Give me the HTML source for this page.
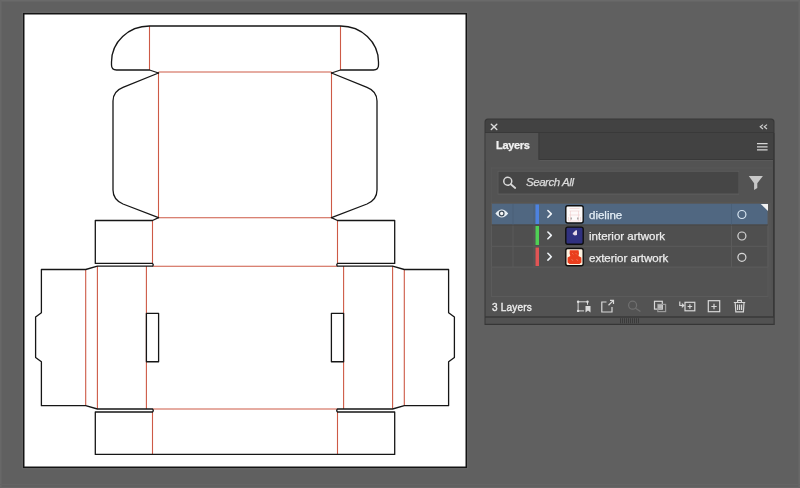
<!DOCTYPE html>
<html><head><meta charset="utf-8">
<style>
html,body{margin:0;padding:0;width:800px;height:488px;overflow:hidden;background:#606060;font-family:"Liberation Sans",sans-serif;}
.abs{position:absolute;}
#art{position:absolute;left:0;top:0;}
#panel{position:absolute;left:485px;top:119px;width:289px;height:206px;background:#535353;}
.txt{position:absolute;white-space:nowrap;color:#e6e6e6;will-change:transform;-webkit-text-stroke:0.25px currentColor;line-height:1;}
</style></head>
<body>
<svg id="art" width="800" height="488" viewBox="0 0 800 488">
  <rect x="0" y="0" width="800" height="1.5" fill="#6a6a6a"/>
  <rect x="0" y="0" width="1.5" height="488" fill="#686868"/>
  <rect x="798.5" y="0" width="1.5" height="488" fill="#686868"/>
  <rect x="0" y="484" width="800" height="1" fill="#646464"/>
  <rect x="0" y="487" width="800" height="1" fill="#676767"/>
  <rect x="22.2" y="12.2" width="445.6" height="456.6" fill="none" stroke="#686868" stroke-width="1"/>
  <rect x="23.75" y="13.75" width="442.5" height="453.5" fill="#fff" stroke="#141414" stroke-width="1.5"/>
  <g fill="none" stroke="#cd5a46" stroke-width="1.1">
    <path d="M149.5 26V70M340.5 26V70M158.5 72H331.5M158.5 72V217.8M331.5 72V217.8M158.5 217.8H331.5M152.5 220.5V263M337.5 220.5V263M152.5 266.2H337.5M146.4 266V409M343.6 266V409M97.4 266V409M392.6 266V409M85.7 269.5V405.7M404.3 269.5V405.7M152.5 409H337.5M152.5 412V454.4M337.5 412V454.4"/>
  </g>
  <g fill="none" stroke="#161616" stroke-width="1.3" stroke-linejoin="round" stroke-linecap="round">
    <!-- lid -->
    <path d="M158.5 73L149.5 70H116.5Q111.5 70 111.5 65V62C111.5 42 128.5 26 149.5 26H340.5C361.5 26 378.5 42 378.5 62V65Q378.5 70 373.5 70H340.5L331.5 73"/>
    <!-- dust flaps -->
    <path d="M158.5 73L123 87.3C116 90 113 94 113 101V190C113 197 116 201 123 204L158.5 217.7"/>
    <path d="M331.5 73L367 87.3C374 90 377 94 377 101V190C377 197 374 201 367 204L331.5 217.7"/>
    <!-- top tabs -->
    <path d="M158.5 217.7L152.5 220.5H95.3V263.4H152.5Q154 264.8 152.5 266.2H97.4L85.7 269.5H41.4V312.75L35.6 317.1V357.4L41.4 361.75V405.7H85.7L97.4 409H152.5Q154 410.5 152.5 412H95.3V454.4H394.7V412H337.5Q336 410.5 337.5 409H392.6L404.3 405.7H448.6V361.75L454.4 357.4V317.1L448.6 312.75V269.5H404.3L392.6 266.2H337.5Q336 264.8 337.5 263.4H394.7V220.5H337.5L331.5 217.7"/>
    <rect x="146.4" y="313.3" width="12.2" height="48.45"/>
    <rect x="331.4" y="313.3" width="12.2" height="48.45"/>
  </g>
</svg>

<svg class="abs" style="left:0;top:0" width="800" height="488" viewBox="0 0 800 488">
  <!-- outer border -->
  <path d="M484.5 325V122Q484.5 118.5 488 118.5H771Q774.5 118.5 774.5 122V325Z" fill="#363636"/>
  <!-- title bar -->
  <path d="M485.5 132V122.5Q485.5 119.5 488.5 119.5H770.5Q773.5 119.5 773.5 122.5V132Z" fill="#424242"/>
  <rect x="485.5" y="132" width="288" height="1" fill="#393939"/>
  <!-- tab row -->
  <rect x="485.5" y="133" width="288" height="27" fill="#424242"/>
  <rect x="485.5" y="133" width="53" height="27.5" fill="#535353"/>
  <rect x="538.5" y="133" width="1" height="26.5" fill="#3a3a3a"/>
  <rect x="539.5" y="159" width="234" height="1" fill="#393939"/>
  <!-- body -->
  <rect x="485.5" y="160" width="288" height="156.5" fill="#535353"/>
  <rect x="539.5" y="160" width="234" height="1" fill="#5a5a5a"/>
  <!-- search field -->
  <rect x="491" y="167.6" width="281" height="0.8" fill="#5a5a5a"/>
  <rect x="491" y="167.6" width="0.8" height="36" fill="#585858"/>
  <rect x="497.5" y="170.8" width="241.5" height="24" fill="#5b5b5b"/>
  <rect x="498.5" y="171.8" width="240" height="21.7" fill="#464646"/>
  <!-- list area -->
  <rect x="491.5" y="203" width="281" height="94" fill="#535353"/>
  <!-- rows -->
  <rect x="491.5" y="203.5" width="276.5" height="21" fill="#506781"/>
  <rect x="491.5" y="225" width="276.5" height="21" fill="#4f4f4f"/>
  <rect x="491.5" y="246.5" width="276.5" height="20" fill="#4f4f4f"/>
  <rect x="491.5" y="202.3" width="276.5" height="1" fill="#5c5850"/>
  <rect x="773" y="133" width="1.5" height="192" fill="#383838"/>
  <rect x="769.5" y="203" width="1" height="96" fill="#595959"/>
  <g fill="#5b5b5b">
    <rect x="491" y="203" width="1" height="94"/>
    <rect x="491" y="296" width="277" height="1"/>
    <rect x="767.5" y="203" width="1" height="94"/>
    <rect x="491.5" y="245.8" width="276.5" height="1"/>
    <rect x="491.5" y="266.6" width="276.5" height="1"/>
    <rect x="767.5" y="225" width="1" height="42"/>
    <rect x="512.5" y="225" width="1" height="42"/>
    <rect x="533.5" y="225" width="1" height="42"/>
    <rect x="731" y="225" width="1" height="42"/>
  </g>
  <rect x="491.5" y="224.5" width="276.5" height="1" fill="#474747"/>
  <g fill="#4a6078">
    <rect x="512.5" y="204" width="1" height="20.5"/>
    <rect x="533.5" y="204" width="1" height="20.5"/>
    <rect x="731" y="204" width="1" height="20.5"/>
  </g>
  <!-- color bars -->
  <rect x="535.5" y="204.5" width="3.5" height="19.5" fill="#4d82e0"/>
  <rect x="535.5" y="226" width="3.5" height="19" fill="#4fcf55"/>
  <rect x="535.5" y="247.5" width="3.5" height="18.5" fill="#e05555"/>
  <!-- footer bottom line & strip -->
  <rect x="485.5" y="316.5" width="288" height="1.2" fill="#3b3b3b"/>
  <rect x="485.5" y="317.7" width="288" height="6.1" fill="#525252"/>
  <g fill="#3a3a3a">
    <rect x="620" y="318.3" width="1" height="5"/><rect x="622" y="318.3" width="1" height="5"/><rect x="624" y="318.3" width="1" height="5"/><rect x="626" y="318.3" width="1" height="5"/><rect x="628" y="318.3" width="1" height="5"/><rect x="630" y="318.3" width="1" height="5"/><rect x="632" y="318.3" width="1" height="5"/><rect x="634" y="318.3" width="1" height="5"/><rect x="636" y="318.3" width="1" height="5"/><rect x="638" y="318.3" width="1" height="5"/>
  </g>

  <!-- icons -->
  <g stroke="#dadada" stroke-width="1.4" fill="none" stroke-linecap="round">
    <path d="M491.3 124.3L496.8 129.6M496.8 124.3L491.3 129.6"/>
  </g>
  <g stroke="#d0d0d0" stroke-width="1.1" fill="none">
    <path d="M763 124.6L760.2 126.8L763 129M767 124.6L764.2 126.8L767 129"/>
  </g>
  <g stroke="#d6d6d6" stroke-width="1.3" fill="none">
    <path d="M757 143.7H767.6M757 146.8H767.6M757 149.9H767.6"/>
  </g>
  <!-- search icon -->
  <g stroke="#d8d8d8" stroke-width="1.5" fill="none" stroke-linecap="round">
    <circle cx="507.75" cy="181.25" r="4"/>
    <path d="M510.8 184.3L515.2 188" stroke-width="1.8"/>
  </g>
  <!-- filter -->
  <path d="M748.8 175.9H762.9L757.3 183.3V188.1L754.1 190V183.3Z" fill="#c8c8c8"/>
  <!-- eye -->
  <path d="M495.4 213.5Q501.8 205.6 508.2 213.5Q501.8 221.4 495.4 213.5Z" fill="#e6eef4"/>
  <circle cx="501.7" cy="213.5" r="2.3" fill="#f4f4f4" stroke="#3c4a58" stroke-width="1.2"/>
  <!-- chevrons -->
  <g stroke="#eef2f6" stroke-width="1.6" fill="none" stroke-linecap="round" stroke-linejoin="round">
    <path d="M547.9 210.5L551.3 213.9L547.9 217.3"/>
    <path d="M547.9 232L551.3 235.4L547.9 238.8"/>
    <path d="M547.9 253.3L551.3 256.7L547.9 260.1"/>
  </g>
  <!-- circles -->
  <g fill="none" stroke-width="1.2">
    <circle cx="741.9" cy="214.5" r="4" stroke="#d8e6f2"/>
    <circle cx="741.9" cy="236" r="4" stroke="#d6d6d6"/>
    <circle cx="741.9" cy="257.3" r="4" stroke="#d6d6d6"/>
  </g>
  <!-- selection triangle -->
  <path d="M760.7 203.9H768V210.9Z" fill="#f2f2f2"/>
  <!-- thumbnails -->
  <g>
    <rect x="565.8" y="205.8" width="17.4" height="17.2" rx="2" fill="#fdfafa" stroke="#0e0e0e" stroke-width="1.4"/>
    <g stroke="#f0cccc" stroke-width="0.6" fill="none">
      <path d="M569.5 208.5H579.5M569.5 211H579.5M570.5 211V221M578.5 211V221M569 215H580M569 221H580M568.5 217V221M580.5 217V221"/>
    </g>
    <rect x="570.6" y="217.5" width="1.2" height="2" fill="#9a9a9a"/>
    <rect x="577.2" y="217.5" width="1.2" height="2" fill="#9a9a9a"/>
    <rect x="565.8" y="227.1" width="17.4" height="17.2" rx="2" fill="#30317f" stroke="#0e0e0e" stroke-width="1.4"/>
    <path d="M575.5 230.5L577 230.3V235L574.8 235.4L572.5 234L573.5 232.5Z" fill="#e8dbe6"/>
    <rect x="565.8" y="248.5" width="17.4" height="17.2" rx="2" fill="#fdf2e0" stroke="#0e0e0e" stroke-width="1.4"/>
    <path d="M569.8 250.3H578.6L579 253.5L578.5 256L581.3 257.5L581.4 262.5L579.5 264H569.5L567.6 262.5L567.6 257.5L570.3 256L569.6 253.5Z" fill="#ea3d1c"/>
    <path d="M572 253L573.5 254.5M575.5 253L577 254.5M571.5 259L573 261M576.5 259L578 261" stroke="#f08a70" stroke-width="0.6"/>
  </g>
  <!-- footer icons -->
  <g stroke="#d8d8d8" stroke-width="1.2" fill="none">
    <path d="M578.1 301.8H587.5V304.8M578.1 301.8V310.9H584" stroke-width="1"/>
    <circle cx="578.1" cy="301.8" r="1.2" fill="#e0e0e0" stroke="none"/>
    <circle cx="587.5" cy="301.8" r="1.2" fill="#e0e0e0" stroke="none"/>
    <circle cx="578.1" cy="310.9" r="1.2" fill="#e0e0e0" stroke="none"/>
    <path d="M585.5 305.9H590.5V312.6L588 310.4L585.5 312.6Z" fill="#dcdcdc" stroke="none"/>
    <path d="M606.5 302H601.8V312H612V307"/>
    <path d="M608.5 305.2L613.5 300.4M610 300.4H613.5V303.9"/>
  </g>
  <g stroke="#707070" stroke-width="1.2" fill="none">
    <circle cx="632.6" cy="305.2" r="4"/>
    <path d="M635.5 308.2L640.4 311.6"/>
  </g>
  <g stroke="#d8d8d8" stroke-width="1.2" fill="none">
    <rect x="654.5" y="301.3" width="7.8" height="7.8"/>
    <rect x="657.8" y="304.4" width="7.8" height="7.2" stroke="#9a9a9a"/>
    <rect x="658" y="304.6" width="4" height="4" fill="#b8b8b8" stroke="none"/>
    <path d="M679.8 301.5V305.5H683.5M681.8 303.6L683.8 305.5L681.8 307.4"/>
    <rect x="685" y="302.3" width="9.8" height="8.5"/>
    <path d="M689.9 304.3V308.8M687.6 306.5H692.2"/>
    <rect x="708.3" y="300.7" width="11.4" height="11"/>
    <path d="M714 303.8V309.2M711.3 306.5H716.7"/>
    <path d="M733.8 302.5H745.2M737.6 302.3V300.3H741.4V302.3M735.2 302.8L735.8 311.8H743.4L744 302.8M737.6 304.5V310M739.6 304.5V310M741.6 304.5V310"/>
  </g>
</svg>
<div class="txt" style="left:495.6px;top:140px;font-size:11px;font-weight:bold;letter-spacing:-0.3px;color:#f2f2f2;">Layers</div>
<div class="txt" style="left:526px;top:176.5px;font-size:11.5px;font-style:italic;letter-spacing:-0.45px;color:#dcdcdc;">Search All</div>
<div class="txt" style="left:589px;top:209.7px;font-size:11.5px;color:#e4eef6;">dieline</div>
<div class="txt" style="left:589px;top:230.5px;font-size:11.5px;color:#eeeeee;">interior artwork</div>
<div class="txt" style="left:589px;top:252.5px;font-size:11.5px;color:#eeeeee;">exterior artwork</div>
<div class="txt" style="left:491.5px;top:303.2px;font-size:10px;letter-spacing:0.2px;color:#eeeeee;-webkit-text-stroke:0.35px #eeeeee;">3 Layers</div>
</body></html>
